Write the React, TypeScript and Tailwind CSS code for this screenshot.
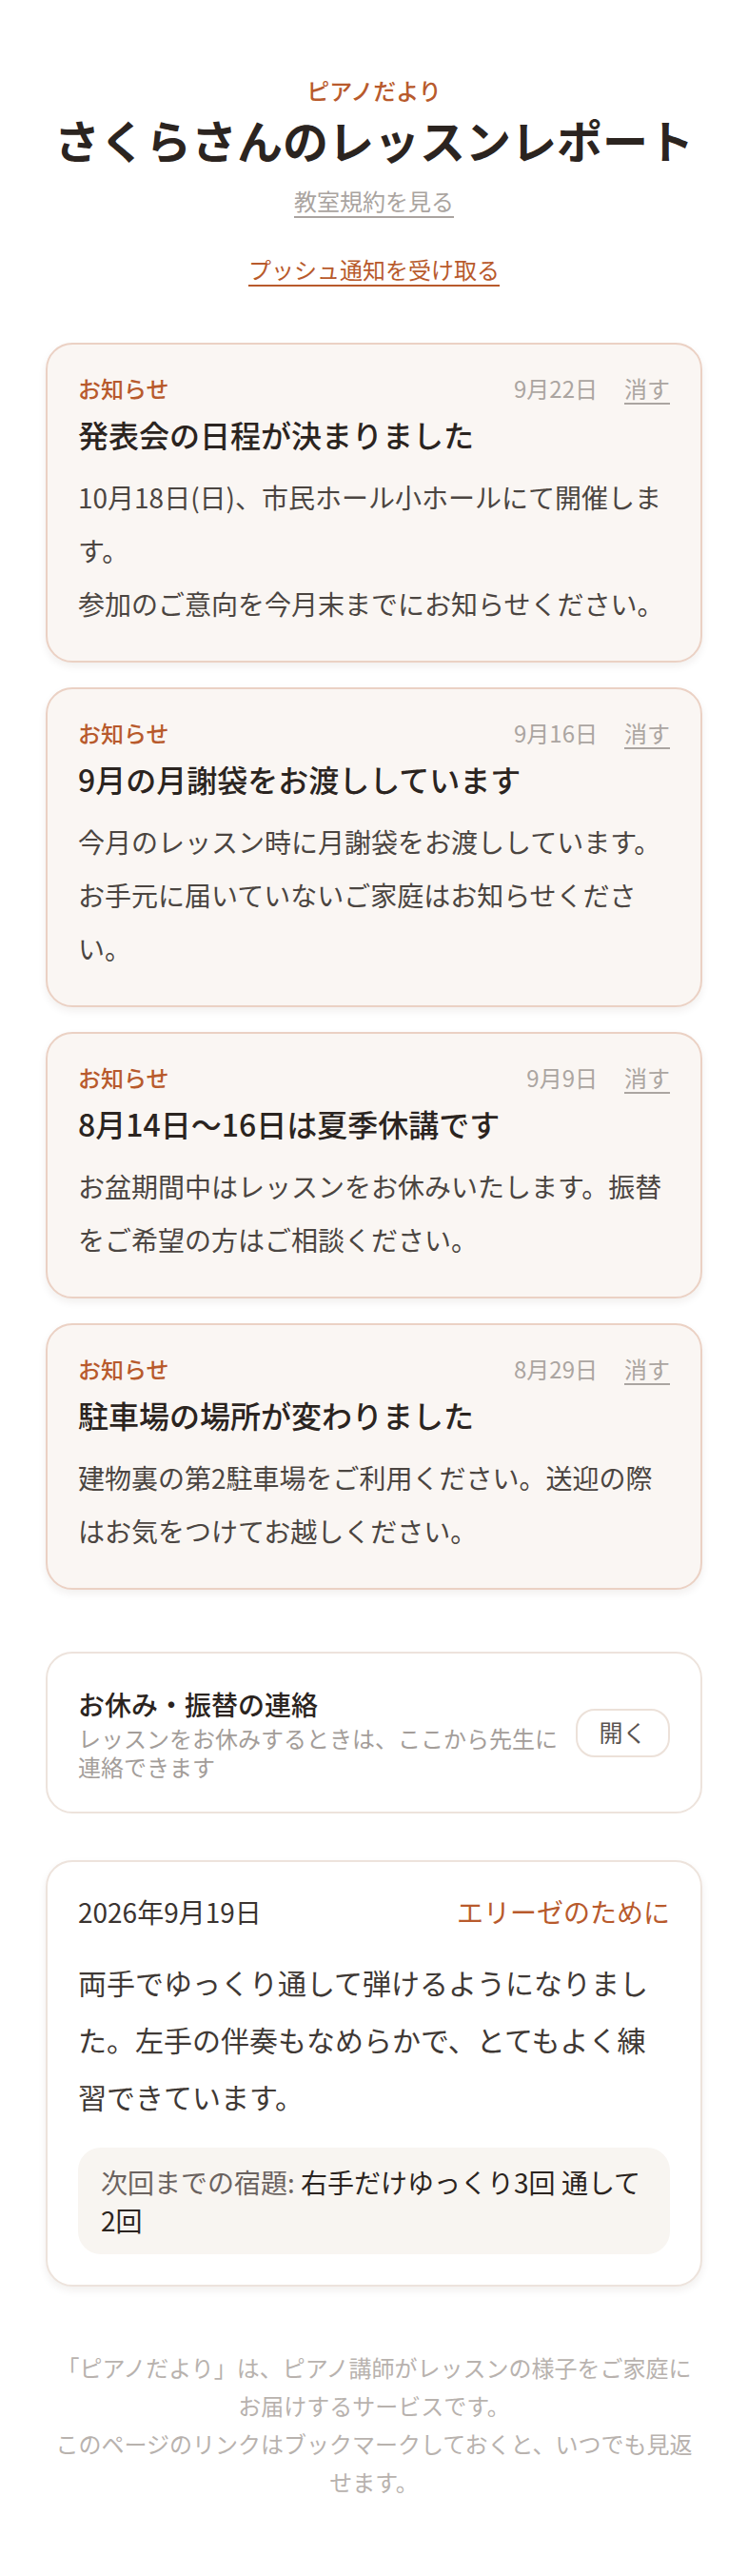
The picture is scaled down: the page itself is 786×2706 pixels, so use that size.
import React from 'react';

interface Notice {
  date: string;
  title: string;
  body: string[];
}

const notices: Notice[] = [
  {
    date: '9月22日',
    title: '発表会の日程が決まりました',
    body: ['10月18日(日)、市民ホール小ホールにて開催します。', '参加のご意向を今月末までにお知らせください。'],
  },
  {
    date: '9月16日',
    title: '9月の月謝袋をお渡ししています',
    body: ['今月のレッスン時に月謝袋をお渡ししています。', 'お手元に届いていないご家庭はお知らせください。'],
  },
  {
    date: '9月9日',
    title: '8月14日〜16日は夏季休講です',
    body: ['お盆期間中はレッスンをお休みいたします。振替をご希望の方はご相談ください。'],
  },
  {
    date: '8月29日',
    title: '駐車場の場所が変わりました',
    body: ['建物裏の第2駐車場をご利用ください。送迎の際はお気をつけてお越しください。'],
  },
];

const NoticeCard: React.FC<{ notice: Notice }> = ({ notice }) => (
  <div className="rounded-[28px] border-2 border-[#ebd1c4] bg-[#faf6f3] p-[32px] shadow-[0_4px_8px_rgba(60,30,10,0.07)]">
    <div className="flex items-center justify-between text-[24px] leading-[28px]">
      <span className="font-medium text-[#b85a2c]">お知らせ</span>
      <div className="flex items-center gap-[28px] text-[#aba5a1]">
        <span>{notice.date}</span>
        <button className="underline underline-offset-[5px]">消す</button>
      </div>
    </div>
    <h2 className="mt-[10px] text-[32px] leading-[48px] font-medium text-[#2b2420]">{notice.title}</h2>
    <div className="mt-[14px] text-[28px] leading-[56px] text-[#4b4541]">
      {notice.body.map((line, i) => (
        <p key={i}>{line}</p>
      ))}
    </div>
  </div>
);

export default function App() {
  return (
    <div className="min-h-screen bg-white font-['Noto_Sans_CJK_JP','Noto_Sans',sans-serif]">
      <div className="px-[48px] pt-[77px] pb-[80px]">
        {/* Header */}
        <header className="flex flex-col items-center text-center">
          <p className="text-[24px] leading-[36px] font-medium text-[#b85a2c]">ピアノだより</p>
          <h1 className="text-[48px] leading-[66px] font-bold text-[#2b2420]">さくらさんのレッスンレポート</h1>
          <a className="mt-[14px] text-[24px] leading-[36px] text-[#aaa4a0] underline underline-offset-[6px]">
            教室規約を見る
          </a>
          <button className="mt-[36px] text-[24px] leading-[36px] text-[#b85a2c] underline decoration-2 underline-offset-[6px]">
            プッシュ通知を受け取る
          </button>
        </header>

        {/* Notices */}
        <div className="mt-[59px] flex flex-col gap-[26px]">
          {notices.map((n) => (
            <NoticeCard key={n.date} notice={n} />
          ))}
        </div>

        {/* Absence contact */}
        <div className="mt-[65px] flex items-center gap-[14px] rounded-[28px] border-2 border-[#ede3dc] bg-white p-[32px]">
          <div className="flex-1">
            <h3 className="text-[28px] leading-[42px] font-medium text-[#2b2420]">お休み・振替の連絡</h3>
            <p className="text-[24px] leading-[30px] text-[#a39d99]">
              レッスンをお休みするときは、ここから先生に連絡できます
            </p>
          </div>
          <button className="flex h-[51px] w-[99px] shrink-0 items-center justify-center rounded-[20px] border-2 border-[#ece1d9] text-[25px] text-[#5a5350]">
            開く
          </button>
        </div>

        {/* Lesson report */}
        <div className="mt-[49px] rounded-[28px] border-2 border-[#ede3dc] bg-white p-[32px] shadow-[0_4px_8px_rgba(60,30,10,0.07)]">
          <div className="flex items-center justify-between text-[28px] leading-[40px]">
            <span className="text-[#3a3330]">2026年9月19日</span>
            <span className="text-[#b85a2c]">エリーゼのために</span>
          </div>
          <p className="mt-[24px] text-[30px] leading-[60px] text-[#3f3935]">
            両手でゆっくり通して弾けるようになりました。左手の伴奏もなめらかで、とてもよく練習できています。
          </p>
          <div className="mt-[24px] rounded-[24px] bg-[#f8f5f1] px-[24px] py-[16px] text-[28px] leading-[40px] text-[#2b2420]">
            <span className="text-[#6b6360]">次回までの宿題: </span>右手だけゆっくり3回 通して2回
          </div>
        </div>

        {/* Footer */}
        <footer className="mt-[65px] text-center text-[24px] leading-[40px] text-[#b8b2ae]">
          <p>「ピアノだより」は、ピアノ講師がレッスンの様子をご家庭にお届けするサービスです。</p>
          <p>このページのリンクはブックマークしておくと、いつでも見返せます。</p>
        </footer>
      </div>
    </div>
  );
}
